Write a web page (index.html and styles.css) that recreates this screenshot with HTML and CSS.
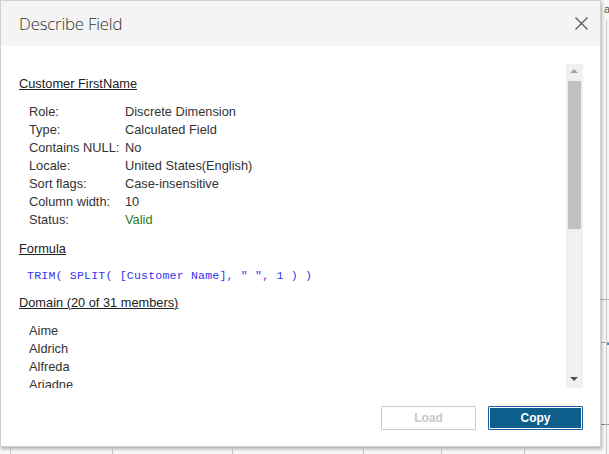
FILE: index.html
```html
<!DOCTYPE html>
<html>
<head>
<meta charset="utf-8">
<link rel="stylesheet" href="styles.css">
</head>
<body>
<div class="sheet">
  <span class="sheet-letter">a</span>
</div>
<div class="dialog">
  <div class="header">
    <h1 class="title">Describe Field</h1>
    <button class="close" aria-label="Close">
      <svg width="13" height="13" viewBox="0 0 13 13"><path d="M0.5 0.5 L12.5 12.5 M12.5 0.5 L0.5 12.5" stroke="#5a5a5a" stroke-width="1.3" fill="none"/></svg>
    </button>
  </div>
  <div class="body">
    <div class="content">
      <div class="section-title first">Customer FirstName</div>
      <div class="props">
        <div class="label">Role:</div><div class="value">Discrete Dimension</div>
        <div class="label">Type:</div><div class="value">Calculated Field</div>
        <div class="label">Contains NULL:</div><div class="value">No</div>
        <div class="label">Locale:</div><div class="value">United States(English)</div>
        <div class="label">Sort flags:</div><div class="value">Case-insensitive</div>
        <div class="label">Column width:</div><div class="value">10</div>
        <div class="label">Status:</div><div class="value valid">Valid</div>
      </div>
      <div class="section-title">Formula</div>
      <div class="code">TRIM( SPLIT( [Customer Name], " ", 1 ) )</div>
      <div class="section-title">Domain (20 of 31 members)</div>
      <div class="members">
        <div>Aime</div>
        <div>Aldrich</div>
        <div>Alfreda</div>
        <div>Ariadne</div>
      </div>
    </div>
    <div class="scrollbar">
      <div class="arrow up"></div>
      <div class="track"><div class="thumb"></div></div>
      <div class="arrow down"></div>
    </div>
  </div>
  <div class="footer">
    <button class="btn load">Load</button>
    <button class="btn copy">Copy</button>
  </div>
</div>
</body>
</html>
```

FILE: styles.css
```css
html, body {
  margin: 0;
  padding: 0;
}
body {
  width: 609px;
  height: 454px;
  overflow: hidden;
  position: relative;
  background: #ffffff;
  font-family: "Liberation Sans", Arial, sans-serif;
  color: #333;
}
.sheet {
  position: absolute;
  inset: 0;
  background:
    linear-gradient(#c8c8c8, #c8c8c8) 10px 449px / 1px 5px no-repeat,
    linear-gradient(#c8c8c8, #c8c8c8) 112px 449px / 1px 5px no-repeat,
    linear-gradient(#c8c8c8, #c8c8c8) 232px 449px / 1px 5px no-repeat,
    linear-gradient(#c8c8c8, #c8c8c8) 363px 449px / 1px 5px no-repeat,
    linear-gradient(#c8c8c8, #c8c8c8) 441px 449px / 1px 5px no-repeat,
    linear-gradient(#c8c8c8, #c8c8c8) 524px 449px / 1px 5px no-repeat,
    linear-gradient(#c8c8c8, #c8c8c8) 606px 20px / 1px 434px no-repeat,
    linear-gradient(#b0b0b0, #b0b0b0) 601px 299px / 8px 1px no-repeat,
    linear-gradient(#b0b0b0, #b0b0b0) 601px 342px / 8px 1px no-repeat,
    linear-gradient(#3d8fd0, #3d8fd0) 607px 343px / 2px 2px no-repeat,
    linear-gradient(#909090, #909090) 601px 424px / 8px 1px no-repeat,
    #f6f6f6;
}
.sheet-letter {
  position: absolute;
  left: 604px;
  top: 3px;
  font-size: 11px;
  color: #555;
}
.dialog {
  position: absolute;
  left: 0;
  top: 0;
  width: 599px;
  height: 445px;
  background: #fff;
  border: 1px solid #cfcfcf;
  box-shadow: 1px 2px 3px rgba(0, 0, 0, 0.28);
  display: flex;
  flex-direction: column;
}
.header {
  height: 45px;
  flex: none;
  background: #f4f4f4;
  display: flex;
  align-items: center;
  justify-content: space-between;
  padding: 0 12px 0 18px;
}
.title {
  margin: 0;
  font-weight: 300;
  font-size: 16.8px;
  font-family: "Open Sans", sans-serif;
  color: #333;
  letter-spacing: -0.2px;
}
.close {
  border: 0;
  background: none;
  padding: 0;
  width: 13px;
  height: 13px;
  display: flex;
}
.body {
  display: flex;
  margin-top: 18px;
  height: 324px;
  flex: none;
}
.content {
  width: 565px;
  overflow: hidden;
  padding: 11px 0 0 18px;
  box-sizing: border-box;
  font-size: 12.8px;
  line-height: 18px;
}
.section-title {
  text-decoration: underline;
  color: #222;
  margin-top: 11px;
  margin-bottom: 10px;
}
.section-title.first {
  margin-top: 0;
}
.props {
  display: grid;
  grid-template-columns: 96px auto;
  padding-left: 10px;
}
.valid {
  color: #2b7a1f;
}
.code {
  font-family: "Liberation Mono", monospace;
  font-size: 11.6px;
  letter-spacing: 0.17px;
  color: #3535f0;
  padding-left: 8px;
  margin-top: -1px;
  margin-bottom: -2px;
}
.members {
  padding-left: 10px;
}
.scrollbar {
  width: 17px;
  background: #f0f0f0;
  display: flex;
  flex-direction: column;
  align-items: center;
}
.arrow {
  height: 16px;
  width: 17px;
  position: relative;
  flex: none;
}
.arrow.up::after {
  content: "";
  position: absolute;
  left: 4px;
  top: 5px;
  border-left: 4px solid transparent;
  border-right: 4px solid transparent;
  border-bottom: 4px solid #a3a3a3;
}
.arrow.down::after {
  content: "";
  position: absolute;
  left: 4px;
  top: 5px;
  border-left: 4px solid transparent;
  border-right: 4px solid transparent;
  border-top: 4px solid #505050;
}
.track {
  flex: 1;
  width: 13px;
}
.thumb {
  height: 148px;
  background: #c1c1c1;
  margin-top: 1px;
}
.footer {
  display: flex;
  justify-content: flex-end;
  gap: 12px;
  padding: 18px 17px 0 0;
}
.btn {
  width: 95px;
  height: 24px;
  box-sizing: border-box;
  font-family: "Liberation Sans", Arial, sans-serif;
  font-size: 12px;
  font-weight: bold;
  border-radius: 1px;
}
.load {
  background: #fff;
  border: 1px solid #cccccc;
  color: #c8c8c8;
}
.copy {
  background: #0e5f8c;
  border: 1px solid #1a5fa8;
  box-shadow: inset 0 0 0 1px #ffffff;
  color: #fff;
}
```
